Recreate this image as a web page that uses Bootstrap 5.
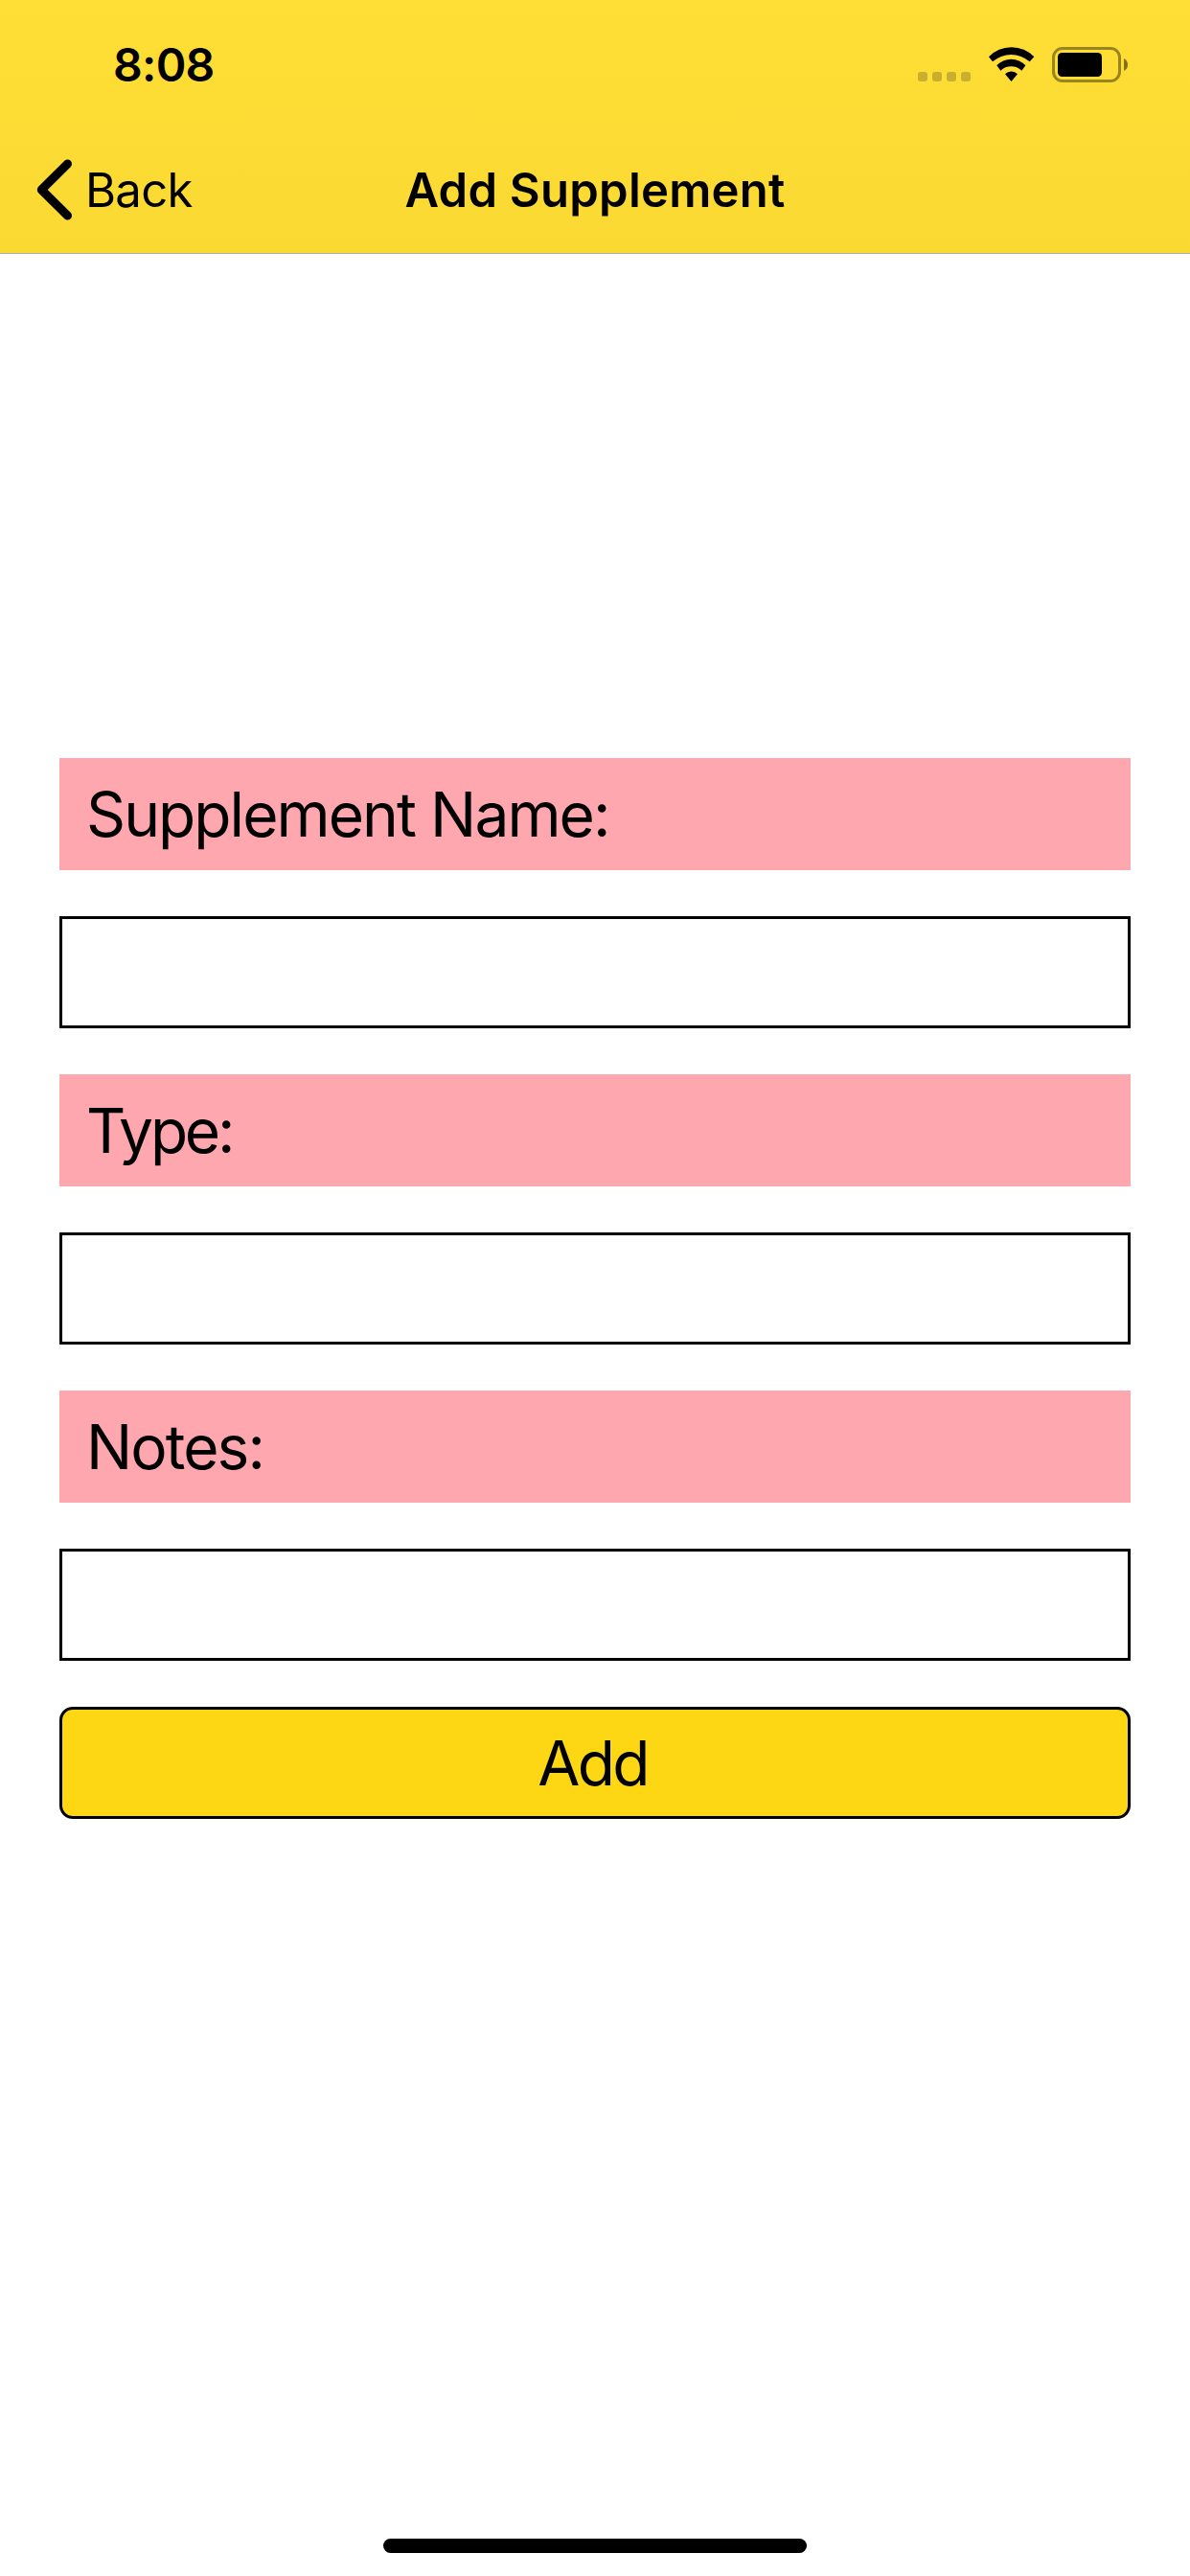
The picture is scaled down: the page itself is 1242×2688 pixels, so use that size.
<!DOCTYPE html>
<html lang="en">
<head>
<meta charset="utf-8">
<meta name="viewport" content="width=device-width, initial-scale=1">
<title>Add Supplement</title>
<link href="https://cdn.jsdelivr.net/npm/bootstrap@5.3.0/dist/css/bootstrap.min.css" rel="stylesheet">
<style>
body { font-family: Inter, "Liberation Sans", sans-serif; color: #000; background: #fff; }
.screen { height: 2688px; }
.app-header { height: 265px; background: linear-gradient(#ffde36, #fad932); border-bottom: 1px solid #b0afa6; }
.status-bar { height: 133px; padding: 0 65px 0 118px; }
.clock { font-size: 48px; font-weight: 600; line-height: 60px; padding-top: 38px; letter-spacing: -.7px; }
.status-icons { padding-top: 49px; }
.title-bar { height: 131px; padding-left: 38px; }
.back-link { color: #000; font-size: 49px; line-height: 131px; letter-spacing: -.7px; gap: 13px; }
.back-link svg { margin-top: -1px; }
.screen-title { font-size: 49px; font-weight: 600; line-height: 131px; letter-spacing: .25px; white-space: nowrap; }
.supplement-form { padding: 526px 62px 0; gap: 48px; }
.field-label { height: 117px; padding-left: 28px; background: #fea7af; font-size: 64px; line-height: 117px; letter-spacing: -1.92px; }
.field-label.label-type { letter-spacing: -3.2px; }
.field-input, .field-input:focus { height: 117px; border: 3px solid #000; box-shadow: none; font-size: 64px; }
.add-btn { height: 117px; padding: 0 5px 0 0; border: 3px solid #000; border-radius: 14px; background: #fed714; font-size: 64px; line-height: 111px; color: #000; letter-spacing: -2.6px; }
.home-bar { width: 442px; height: 15px; margin-bottom: 24px; border-radius: 8px; background: #000; }
</style>
</head>
<body>
<div class="screen d-flex flex-column">
  <header class="app-header">
    <div class="status-bar d-flex justify-content-between align-items-start">
      <div class="clock">8:08</div>
      <div class="status-icons d-flex align-items-start">
        <svg width="219" height="38" viewBox="0 0 219 38" aria-hidden="true">
          <g fill="#c9af2f"><rect y="26" width="10" height="10" rx="3"/><rect x="15" y="26" width="10" height="10" rx="3"/><rect x="30" y="26" width="10" height="10" rx="3"/><rect x="45" y="26" width="10" height="10" rx="3"/></g>
          <g transform="translate(72 -2.3) scale(.33333)"><path d="M6 38A98 98 0 0 1 148 38L134 53A87 87 0 0 0 18 53ZM31 65A61 61 0 0 1 121 65L109 81A48 48 0 0 0 43 81ZM57 92A27 27 0 0 1 96 92L76.500 115Z"/></g>
          <rect x="141.500" y="1.500" width="69" height="34" rx="9.500" fill="none" stroke="#99851f" stroke-width="3"/>
          <rect x="146" y="6" width="46" height="25" rx="4.500"/>
          <path d="M215 12Q219 14 219 18.500T215 25Z" fill="#80701f"/>
        </svg>
      </div>
    </div>
    <nav class="title-bar d-flex align-items-center position-relative" aria-label="Navigation">
      <a href="#" class="back-link d-flex align-items-center text-decoration-none">
        <svg width="38" height="64" viewBox="0 0 38 64" fill="none" stroke="#000" stroke-width="9" stroke-linecap="round" stroke-linejoin="round" aria-hidden="true"><path d="M32.500 5L5.300 32L32.500 59"/></svg>
        <span>Back</span>
      </a>
      <h1 class="screen-title position-absolute start-50 translate-middle-x m-0">Add Supplement</h1>
    </nav>
  </header>
  <form class="supplement-form d-flex flex-column">
    <label class="field-label" for="name">Supplement Name:</label>
    <input class="field-input form-control rounded-0" id="name">
    <label class="field-label label-type" for="type">Type:</label>
    <input class="field-input form-control rounded-0" id="type">
    <label class="field-label" for="notes">Notes:</label>
    <input class="field-input form-control rounded-0" id="notes">
    <button type="button" class="add-btn btn">Add</button>
  </form>
  <div class="home-bar mt-auto mx-auto"></div>
</div>
<script src="https://cdn.jsdelivr.net/npm/bootstrap@5.3.0/dist/js/bootstrap.bundle.min.js"></script>
</body>
</html>
